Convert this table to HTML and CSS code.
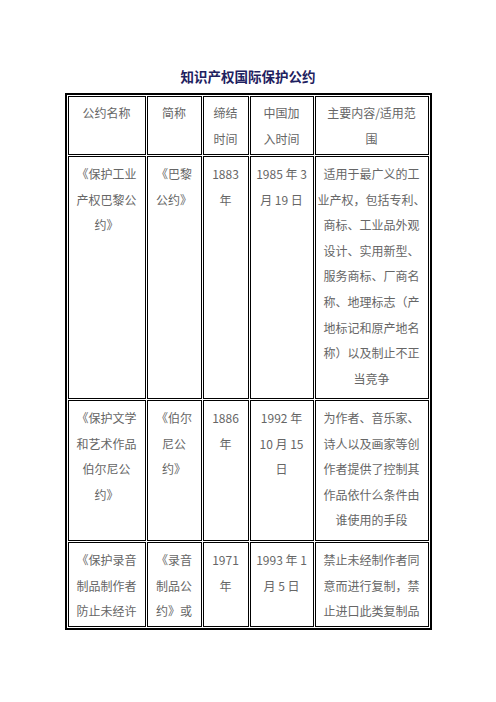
FILE: index.html
```html
<!DOCTYPE html>
<html lang="zh">
<head>
<meta charset="utf-8">
<title>知识产权国际保护公约</title>
<link rel="stylesheet" href="styles.css">
</head>
<body>
<div class="page">
  <h1 class="title">知识产权国际保护公约</h1>
  <table class="grid">
    <tr class="r0">
      <th class="c1">公约名称</th>
      <th class="c2">简称</th>
      <th class="c3">缔结<br>时间</th>
      <th class="c4">中国加<br>入时间</th>
      <th class="c5">主要内容/适用范<br>围</th>
    </tr>
    <tr class="r1">
      <td>《保护工业<br>产权巴黎公<br>约》</td>
      <td>《巴黎<br>公约》</td>
      <td>1883<br>年</td>
      <td>1985 年 3<br>月 19 日</td>
      <td>适用于最广义的工<br>业产权，包括专利、<br>商标、工业品外观<br>设计、实用新型、<br>服务商标、厂商名<br>称、地理标志（产<br>地标记和原产地名<br>称）以及制止不正<br>当竞争</td>
    </tr>
    <tr class="r2">
      <td>《保护文学<br>和艺术作品<br>伯尔尼公<br>约》</td>
      <td>《伯尔<br>尼公<br>约》</td>
      <td>1886<br>年</td>
      <td>1992 年<br>10 月 15<br>日</td>
      <td>为作者、音乐家、<br>诗人以及画家等创<br>作者提供了控制其<br>作品依什么条件由<br>谁使用的手段</td>
    </tr>
    <tr class="r3">
      <td>《保护录音<br>制品制作者<br>防止未经许</td>
      <td>《录音<br>制品公<br>约》或</td>
      <td>1971<br>年</td>
      <td>1993 年 1<br>月 5 日</td>
      <td>禁止未经制作者同<br>意而进行复制，禁<br>止进口此类复制品</td>
    </tr>
  </table>
</div>
</body>
</html>
```

FILE: styles.css
```css
html, body {
  margin: 0;
  padding: 0;
  background: #ffffff;
}

.page {
  width: 496px;
  padding-top: 66px;
  font-family: "Noto Sans CJK SC", "Noto Sans", sans-serif;
}

.title {
  margin: 0;
  height: 20px;
  line-height: 20px;
  font-size: 13.5px;
  font-weight: 700;
  color: #1e2160;
  text-align: center;
}

.grid {
  margin: 7px auto 0;
  width: 367px;
  table-layout: fixed;
  border-collapse: separate;
  border-spacing: 1px;
  border: 2px solid #000;
}

.grid th,
.grid td {
  box-sizing: border-box;
  border: 1px solid #000;
  padding: 4px 0 0;
  vertical-align: top;
  text-align: center;
  white-space: nowrap;
  overflow: hidden;
  font-size: 12px;
  font-weight: 400;
  line-height: 25.6px;
  color: #666666;
}

.grid th {
  padding-top: 3px;
}

.c1 { width: 78px; }
.c2 { width: 55px; }
.c3 { width: 46px; }
.c4 { width: 64px; }
.c5 { width: 114px; }

.r0 th { height: 59px; }
.r1 td { height: 243px; }
.r2 td { height: 141px; }
.r3 td { height: 85px; }
```
